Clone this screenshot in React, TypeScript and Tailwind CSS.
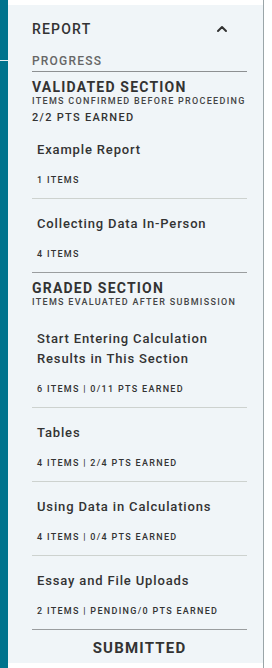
import { ChevronUp } from 'lucide-react';

type Item = { title: string; meta: string };

const validatedItems: Item[] = [
  { title: 'Example Report', meta: '1 ITEMS' },
  { title: 'Collecting Data In-Person', meta: '4 ITEMS' },
];

const gradedItems: Item[] = [
  { title: 'Start Entering Calculation Results in This Section', meta: '6 ITEMS | 0/11 PTS EARNED' },
  { title: 'Tables', meta: '4 ITEMS | 2/4 PTS EARNED' },
  { title: 'Using Data in Calculations', meta: '4 ITEMS | 0/4 PTS EARNED' },
  { title: 'Essay and File Uploads', meta: '2 ITEMS | PENDING/0 PTS EARNED' },
];

function ItemRow({ item, last }: { item: Item; last: boolean }) {
  return (
    <div
      className={`pl-[5px] pr-2 pt-[15px] pb-[12px] border-b ${
        last ? 'border-[#9a9d9f]' : 'border-[#cdd2cf]'
      }`}
    >
      <div className="text-[13px] leading-[20px] font-medium tracking-[0.85px] text-[#333]">
        {item.title}
      </div>
      <div className="mt-[14px] text-[9px] leading-[12px] font-medium tracking-[1.3px] text-[#333]">
        {item.meta}
      </div>
    </div>
  );
}

function SectionHeader({ title, subtitle }: { title: string; subtitle: string }) {
  return (
    <div className="mt-[7px]">
      <div className="text-[14px] leading-[16px] font-bold tracking-[1.2px] text-[#333]">{title}</div>
      <div className="text-[9px] leading-[12px] font-medium tracking-[1.3px] text-[#444]">{subtitle}</div>
    </div>
  );
}

export default function App() {
  return (
    <div className="flex h-[668px] w-[272px] bg-white font-['Roboto',sans-serif]">
      {/* teal nav strip */}
      <div className="w-[8px] shrink-0 bg-[#00738d] flex flex-col">
        <div className="h-[60px]" />
        <div className="h-px bg-[#e6eef0]" />
      </div>

      {/* side panel */}
      <div className="w-[256px] shrink-0 border-r border-[#9aa5a8] pt-[5px] pb-[5px]">
        <div className="h-full bg-[#f0f5f8] pl-[24px] pr-[16px] pt-[14px]">
          <div className="flex items-center justify-between h-[20px] pr-[17px]">
            <span className="text-[14px] leading-[20px] font-medium tracking-[1.2px] text-[#333]">REPORT</span>
            <ChevronUp size={16} strokeWidth={3} className="text-[#333]" />
          </div>

          <div className="mt-[14px] pb-[2px] border-b border-[#8d9092] text-[12px] leading-[16px] font-medium tracking-[1.2px] text-[#666]">
            PROGRESS
          </div>

          <div className="mt-[1px]">
            <SectionHeader title="VALIDATED SECTION" subtitle="ITEMS CONFIRMED BEFORE PROCEEDING" />
            <div className="mt-[4px] text-[11px] leading-[14px] font-medium tracking-[1.3px] text-[#333]">
              2/2 PTS EARNED
            </div>
          </div>

          {validatedItems.map((item, i) => (
            <ItemRow key={item.title} item={item} last={i === validatedItems.length - 1} />
          ))}

          <SectionHeader title="GRADED SECTION" subtitle="ITEMS EVALUATED AFTER SUBMISSION" />
          <div className="h-[6px]" />

          {gradedItems.map((item, i) => (
            <ItemRow key={item.title} item={item} last={i === gradedItems.length - 1} />
          ))}

          <div className="mt-[9px] text-center text-[15px] leading-[18px] font-bold tracking-[1.2px] text-[#333]">
            SUBMITTED
          </div>
        </div>
      </div>
    </div>
  );
}
